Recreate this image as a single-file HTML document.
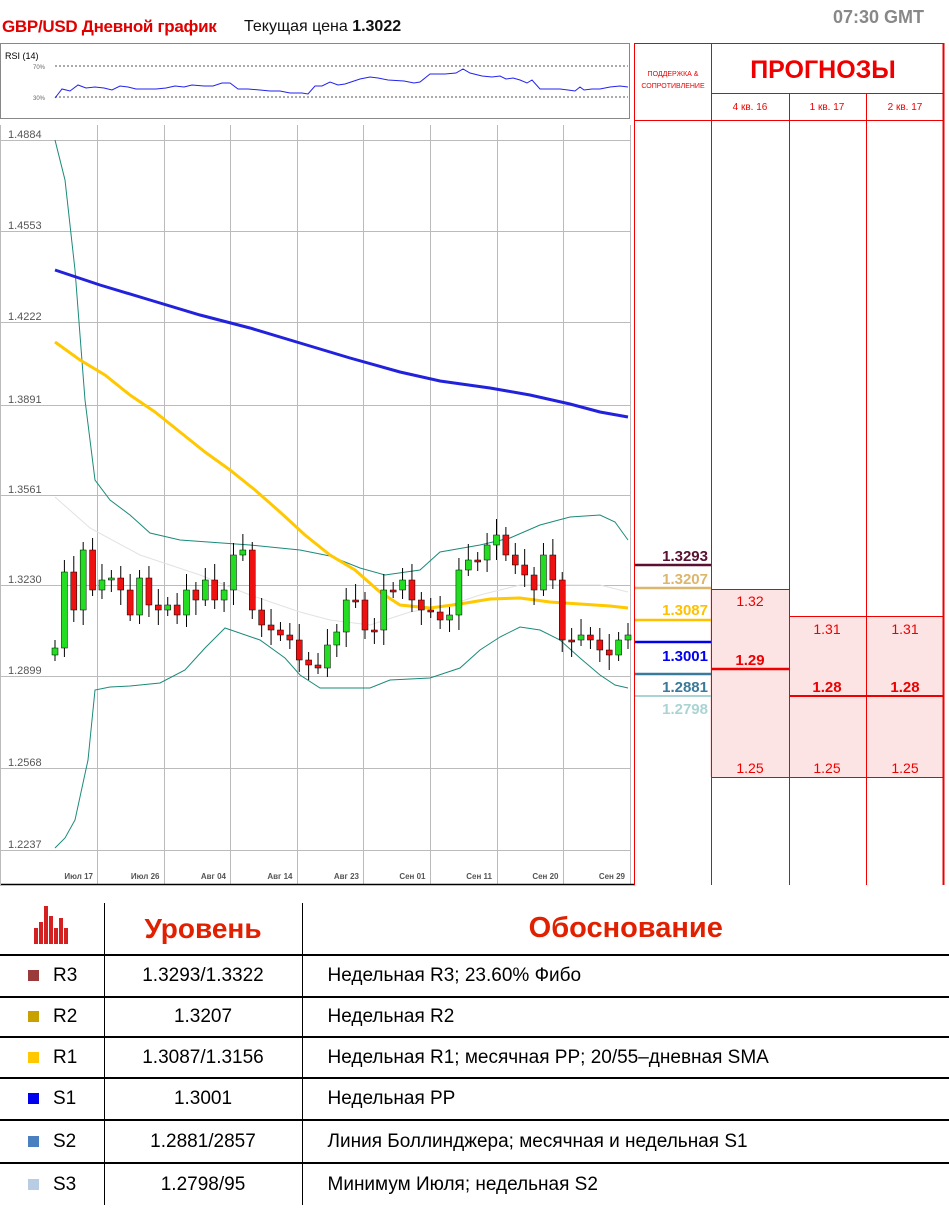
<!DOCTYPE html>
<html><head><meta charset="utf-8">
<style>
body{margin:0;width:949px;height:1210px;background:#fff;font-family:"Liberation Sans","Noto Sans CJK SC",sans-serif;position:relative;overflow:hidden}
.a{position:absolute}
table{border-collapse:collapse;table-layout:fixed}
</style></head><body>
<div class="a" style="left:2px;top:17px;font-size:17px;font-weight:bold;color:#e00000;letter-spacing:-0.3px">GBP/USD Дневной график</div>
<div class="a" style="left:244px;top:18px;font-size:16px;color:#111">Текущая цена <b>1.3022</b></div>
<div class="a" style="left:833px;top:7px;font-size:18px;font-weight:bold;color:#888">07:30 GMT</div>

<svg class="a" style="left:0;top:0" width="949" height="890" xmlns="http://www.w3.org/2000/svg" id="ch">
<rect x="0.5" y="43.5" width="629" height="75" fill="#fff" stroke="#888"/>
<text x="5" y="59" font-size="9" fill="#000" font-family="Liberation Sans">RSI (14)</text>
<text x="33" y="69" font-size="6" fill="#666" font-family="Liberation Sans">70%</text>
<text x="33" y="100" font-size="6" fill="#666" font-family="Liberation Sans">30%</text>
<line x1="55" y1="66" x2="628" y2="66" stroke="#555" stroke-dasharray="2,2"/>
<line x1="55" y1="97" x2="628" y2="97" stroke="#555" stroke-dasharray="2,2"/>
<polyline fill="none" stroke="#2222ee" stroke-width="1" points="55,98 62,89 70,91 78,85 86,88 95,87 104,88 112,90 120,86 128,87 136,89 146,89 156,89 166,88 175,86 184,87 192,85 204,86 213,86 222,83 230,83 238,89 248,89 260,90 270,91 280,91 290,93 302,93 308,94 315,86 322,86 330,82 338,85 345,84 360,79 370,77 378,78 388,80 404,81 414,83 420,82 430,74 445,74 456,73 463,69 470,73 482,76 492,77 500,76 506,79 513,78 520,80 527,83 532,80 540,89 550,89 560,89 568,90 575,91 580,87 584,90 592,89 600,89 610,87 620,86 628,87"/>
<g id="grid" stroke="#bbb" stroke-width="1"></g>
<g id="lines"></g>
<g id="candles"></g>
<line x1="0" y1="884.5" x2="635" y2="884.5" stroke="#000" stroke-width="1.5"/>
<line x1="0.5" y1="125" x2="0.5" y2="885" stroke="#bbb"/>
<g font-family="Liberation Sans" font-size="11" fill="#555" id="ylab"></g>
<g font-family="Liberation Sans" font-size="8" fill="#555" font-weight="bold" id="xlab"></g>

<g stroke="#ee0000" stroke-width="1" fill="none">
<rect x="710" y="589" width="79" height="188" fill="#fde4e4" stroke="none"/>
<rect x="789" y="617" width="155" height="160" fill="#fde4e4" stroke="none"/>
<line x1="634.5" y1="43" x2="634.5" y2="885"/>
<line x1="711.5" y1="43" x2="711.5" y2="885"/>
<line x1="789.5" y1="93" x2="789.5" y2="885"/>
<line x1="866.5" y1="93" x2="866.5" y2="885"/>
<line x1="943.5" y1="43" x2="943.5" y2="885" stroke-width="2"/>
<line x1="634" y1="43.5" x2="944" y2="43.5"/>
<line x1="711" y1="93.5" x2="944" y2="93.5"/>
<line x1="634" y1="120.5" x2="944" y2="120.5"/>
<line x1="711" y1="589.5" x2="789" y2="589.5"/>
<line x1="789" y1="616.5" x2="944" y2="616.5"/>
<line x1="711" y1="669" x2="789" y2="669" stroke-width="2.5"/>
<line x1="789" y1="696" x2="944" y2="696" stroke-width="2"/>
<line x1="711" y1="777.5" x2="944" y2="777.5"/>
</g>
<g font-family="Liberation Sans" fill="#ee0000" text-anchor="middle">
<text x="673" y="76" font-size="7">ПОДДЕРЖКА &amp;</text>
<text x="673" y="88" font-size="7">СОПРОТИВЛЕНИЕ</text>
<text x="823" y="78" font-size="25" font-weight="bold">ПРОГНОЗЫ</text>
<text x="750" y="110" font-size="10">4 кв. 16</text>
<text x="827" y="110" font-size="10">1 кв. 17</text>
<text x="905" y="110" font-size="10">2 кв. 17</text>
<text x="750" y="606" font-size="14">1.32</text>
<text x="827" y="634" font-size="14">1.31</text>
<text x="905" y="634" font-size="14">1.31</text>
<text x="750" y="665" font-size="15" font-weight="bold">1.29</text>
<text x="827" y="692" font-size="15" font-weight="bold">1.28</text>
<text x="905" y="692" font-size="15" font-weight="bold">1.28</text>
<text x="750" y="773" font-size="14">1.25</text>
<text x="827" y="773" font-size="14">1.25</text>
<text x="905" y="773" font-size="14">1.25</text>
</g>
<g font-family="Liberation Sans" font-weight="bold" font-size="15" text-anchor="end">
<text x="708" y="561" fill="#5a1030">1.3293</text>
<line x1="635" y1="565" x2="711" y2="565" stroke="#5a1030" stroke-width="2.5"/>
<text x="708" y="584" fill="#dcb66a">1.3207</text>
<line x1="635" y1="588" x2="711" y2="588" stroke="#dcb66a" stroke-width="2.5"/>
<text x="708" y="615" fill="#ffc000">1.3087</text>
<line x1="635" y1="620" x2="711" y2="620" stroke="#ffc000" stroke-width="2.5"/>
<line x1="635" y1="642" x2="711" y2="642" stroke="#0000ee" stroke-width="2.5"/>
<text x="708" y="661" fill="#0000ee">1.3001</text>
<line x1="635" y1="674" x2="711" y2="674" stroke="#3a7a9a" stroke-width="2.5"/>
<text x="708" y="692" fill="#3a7a9a">1.2881</text>
<line x1="635" y1="696" x2="711" y2="696" stroke="#aad4d4" stroke-width="2"/>
<text x="708" y="714" fill="#aad4d4">1.2798</text>
</g>
</svg>

<div class="a" style="left:0;top:903px;width:949px">
<table style="width:949px;font-size:19px;color:#000" id="tb">
<colgroup><col style="width:104px"><col style="width:198px"><col></colgroup>
<tr style="height:52px">
<td style="border-right:1px solid #000;border-bottom:2px solid #000;text-align:center;vertical-align:bottom;padding-bottom:4px">
<svg width="38" height="40" viewBox="0 0 38 40"><g fill="#d42020"><rect x="1" y="24" width="4" height="16"/><rect x="6" y="18" width="4" height="22"/><rect x="11" y="2" width="4" height="38"/><rect x="16" y="12" width="4" height="28"/><rect x="21" y="24" width="4" height="16"/><rect x="26" y="14" width="4" height="26"/><rect x="31" y="24" width="4" height="16"/></g></svg></td>
<td style="border-right:1px solid #000;border-bottom:2px solid #000;text-align:center;color:#e02000;font-weight:bold;font-size:28px">Уровень</td>
<td style="border-bottom:2px solid #000;text-align:center;color:#e02000;font-weight:bold;font-size:29px">Обоснование</td></tr>
</table>
</div>
<script>
var rows=[["#9b3a3a","R3","1.3293/1.3322","Недельная R3; 23.60% Фибо",42],["#c8a000","R2","1.3207","Недельная R2",40],["#ffc800","R1","1.3087/1.3156","Недельная R1; месячная PP; 20/55–дневная SMA",41],["#0000ee","S1","1.3001","Недельная PP",42],["#4a80c0","S2","1.2881/2857","Линия Боллинджера; месячная и недельная S1",43],["#b8cce4","S3","1.2798/95","Минимум Июля; недельная S2",42]];
var h="";rows.forEach(function(r,i){var bb=(i<5?'border-bottom:2px solid #000;':'');h+='<tr style="height:'+r[4]+'px"><td style="border-right:1px solid #000;'+bb+'padding-left:28px">\u200b<span style="display:inline-block;width:11px;height:11px;background:'+r[0]+';margin-right:14px"></span>'+r[1]+'</td><td style="border-right:1px solid #000;'+bb+'text-align:center">'+r[2]+'</td><td style="'+bb+'padding-left:25px">'+r[3]+'</td></tr>';});
document.getElementById("tb").insertAdjacentHTML("beforeend",h);
var NS="http://www.w3.org/2000/svg";
function el(p,t,a){var e=document.createElementNS(NS,t);for(var k in a)e.setAttribute(k,a[k]);p.appendChild(e);return e;}
var g=document.getElementById("grid");
[97,164,230,297,363,430,497,563,630].forEach(function(x){el(g,"line",{x1:x+.5,y1:125,x2:x+.5,y2:884});});
var ys=[140,231,322,405,495,585,676,768,850],lb=["1.4884","1.4553","1.4222","1.3891","1.3561","1.3230","1.2899","1.2568","1.2237"];
var yl=document.getElementById("ylab");
ys.forEach(function(y,i){el(g,"line",{x1:0,y1:y+.5,x2:630,y2:y+.5});var t=el(yl,"text",{x:8,y:y-2});t.textContent=lb[i];});
var xl=document.getElementById("xlab");
["Июл 17","Июл 26","Авг 04","Авг 14","Авг 23","Сен 01","Сен 11","Сен 20","Сен 29"].forEach(function(s,i){var t=el(xl,"text",{x:93+i*66.5,y:879,"text-anchor":"end"});t.textContent=s;});
var L=document.getElementById("lines");
function pl(pts,c,w){el(L,"polyline",{points:pts,fill:"none",stroke:c,"stroke-width":w});}
pl("55,140 65,180 75,270 85,400 95,480 110,500 130,515 150,533 180,540 250,545 300,550 330,556 360,568 385,575 420,570 440,552 480,545 510,538 540,525 570,517 600,515 615,522 628,540","#1a8a7a",1);
pl("55,848 65,838 75,820 88,760 95,690 110,687 130,686 160,683 185,670 205,648 225,628 260,640 285,658 300,675 320,688 370,688 390,680 430,678 460,668 480,650 500,637 520,627 540,630 560,640 580,658 600,675 615,685 628,688","#1a8a7a",1);
pl("55,497 90,528 140,555 200,575 250,595 300,612 330,620 370,625 410,612 450,605 480,595 520,585 560,585 600,585 628,592","#e2e2e2",1);
pl("55,270 100,285 150,300 200,315 250,328 300,343 350,358 400,372 440,381 490,388 530,395 570,404 600,412 628,417","#2222dd",3);
pl("55,342 80,360 105,375 130,395 155,412 180,432 205,452 230,470 255,490 280,512 305,535 330,555 355,570 380,592 400,605 430,608 460,604 490,599 520,598 550,602 580,604 610,606 628,608","#ffc800",3);
var C=document.getElementById("candles");
var cl=[648,572,610,550,590,580,578,590,615,578,605,610,605,615,590,600,580,600,590,555,550,610,625,630,635,640,660,665,668,645,632,600,600,630,630,590,590,580,600,610,612,620,615,570,560,560,545,535,555,565,575,590,555,580,640,640,635,640,650,655,640,635];
var prev=655,dx=(628-55)/(cl.length-1);
cl.forEach(function(c,i){var x=55+i*dx,o=prev,up=c<o,top=Math.min(o,c),bot=Math.max(o,c);if(bot-top<2)bot=top+2;
el(C,"line",{x1:x,y1:top-8-(i%3)*4,x2:x,y2:bot+6+(i%4)*3,stroke:"#000","stroke-width":1});
el(C,"rect",{x:x-3,y:top,width:6,height:bot-top,fill:up?"#22dd22":"#ee1111",stroke:"#000","stroke-width":0.5});prev=c;});
</script>
</body></html>
